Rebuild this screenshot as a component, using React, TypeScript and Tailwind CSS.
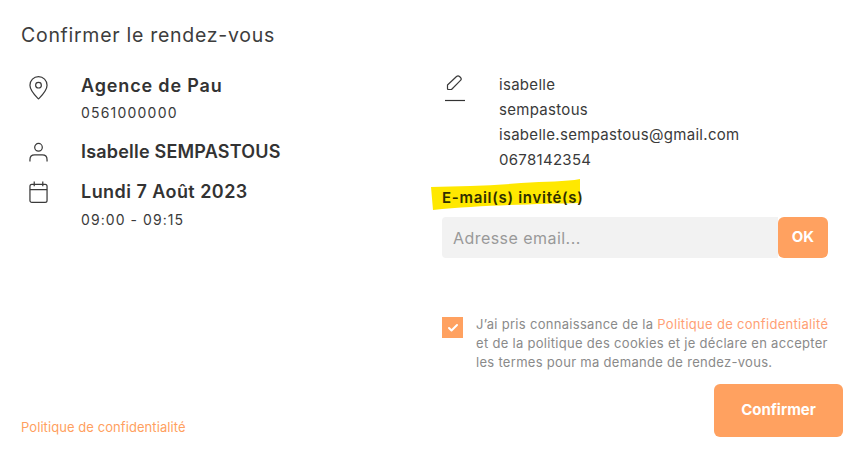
import { Check } from "lucide-react";

function Pin() {
  return (
    <svg width="20" height="26" viewBox="0 0 20 26" fill="none" stroke="#3a3a3a" strokeWidth="1.3">
      <path d="M10 24.5C6 20.5 1 16 1 10.2C1 5 5 1 10 1C15 1 19 5 19 10.2C19 16 14 20.5 10 24.5Z" strokeLinejoin="round" />
      <circle cx="10" cy="10" r="3" />
    </svg>
  );
}
function User() {
  return (
    <svg width="20" height="21" viewBox="0 0 20 21" fill="none" stroke="#3a3a3a" strokeWidth="1.3">
      <circle cx="10" cy="5" r="4" />
      <path d="M1 20V18C1 15 3 13 6 13H14C17 13 19 15 19 18V20" />
    </svg>
  );
}
function Calendar() {
  return (
    <svg width="20" height="23" viewBox="0 0 20 23" fill="none" stroke="#3a3a3a" strokeWidth="1.3">
      <rect x="1" y="3" width="18" height="19" rx="2" />
      <path d="M1 8.5H19M5.5 0V5M14.5 0V5" />
    </svg>
  );
}
function Pencil() {
  return (
    <svg width="20" height="28" viewBox="0 0 20 28" fill="none" stroke="#3a3a3a" strokeWidth="1.2">
      <path d="M2.5 13.5V10L11.5 1.5C12.5 .6 13.6 .6 14.5 1.5L15.5 2.5C16.4 3.4 16.4 4.5 15.5 5.4L6.5 14.5H3.5Q2.5 14.5 2.5 13.5Z" strokeLinejoin="round" />
      <path d="M0 25.5H20" stroke="#333" />
    </svg>
  );
}

export default function App() {
  return (
    <div className="flex h-[450px] w-[861px] overflow-hidden bg-white font-['Inter','Liberation_Sans',sans-serif] text-[#3a3a3a]">
      <div className="flex w-[442px] flex-col pb-[14px] pl-[21px] pt-[22px]">
        <h1 className="text-[19.5px] font-normal leading-[26px] tracking-[0.72px] text-[#3d3d3d]">Confirmer le rendez-vous</h1>
        <div className="mt-[26px] flex gap-[33px]">
          <div className="flex w-[27px] justify-center pl-[8px] pt-[1px]"><Pin /></div>
          <div>
            <div className="text-[18px] font-semibold leading-[24px] tracking-[0.85px] text-[#333]">Agence de Pau</div>
            <div className="mt-[5px] text-[14px] leading-[20px] tracking-[1.2px]">0561000000</div>
          </div>
        </div>
        <div className="mt-[17px] flex items-start gap-[33px]">
          <div className="flex w-[27px] justify-center pl-[8px] pt-[2px]"><User /></div>
          <div className="text-[18px] font-semibold leading-[24px] tracking-[0.2px] text-[#333]">Isabelle SEMPASTOUS</div>
        </div>
        <div className="mt-[16px] flex gap-[33px]">
          <div className="flex w-[27px] justify-center pl-[8px] pt-[1px]"><Calendar /></div>
          <div>
            <div className="text-[18px] font-semibold leading-[24px] tracking-[0.45px] text-[#333]">Lundi 7 Août 2023</div>
            <div className="mt-[6px] text-[14px] leading-[20px] tracking-[1.07px]">09:00 - 09:15</div>
          </div>
        </div>
        <a className="mt-auto text-[13px] leading-[18px] tracking-[0.07px] text-[#ff9f60]">Politique de confidentialité</a>
      </div>
      <div className="flex w-[419px] flex-col pt-[72px]">
        <div className="flex">
          <div className="ml-[3px] w-[54px] pt-[3px]"><Pencil /></div>
          <div className="text-[15px] leading-[25px] tracking-[0.3px]">
            <div>isabelle</div>
            <div>sempastous</div>
            <div>isabelle.sempastous@gmail.com</div>
            <div>0678142354</div>
          </div>
        </div>
        <div className="relative mt-[13px] h-[25px] text-[15px] font-semibold leading-[25px] tracking-[0.7px] text-[#2f2f00]">
          <svg className="absolute left-[-11px] top-[-6px]" width="150" height="32" viewBox="0 0 150 32">
            <path d="M0 8C30 7 60 7 90 4C115 2 135 3 149 0L149 24C110 25 50 26 2 31Z" fill="#ffe800" />
          </svg>
          <span className="relative">E-mail(s) invité(s)</span>
        </div>
        <div className="mt-[7px] flex h-[41px] w-[386px]">
          <div className="flex flex-1 items-center rounded-l-[4px] bg-[#f2f2f2] pl-[11px] text-[16px] tracking-[0.45px] text-[#999]">Adresse email...</div>
          <div className="flex w-[50px] items-center justify-center rounded-[6px] bg-[#ffa160] text-[15px] font-bold text-white">OK</div>
        </div>
        <div className="mt-[56px] flex">
          <div className="mt-[3px] flex h-[21px] w-[21px] items-center justify-center bg-[#ffa160]">
            <Check size={12} color="white" strokeWidth={4} />
          </div>
          <p className="ml-[13px] mt-[1px] w-[358px] text-[13px] leading-[19px] tracking-[0.3px] text-[#8a8a8a]">
            J’ai pris connaissance de la <span className="text-[#ff9f75]">Politique de confidentialité</span> et de la politique des cookies et je déclare en accepter les termes pour ma demande de rendez-vous.
          </p>
        </div>
        <div className="mt-[12px] flex justify-end pr-[18px]">
          <button className="h-[53px] w-[129px] rounded-[6px] bg-[#ffa160] text-[15px] font-bold text-white">Confirmer</button>
        </div>
      </div>
    </div>
  );
}
